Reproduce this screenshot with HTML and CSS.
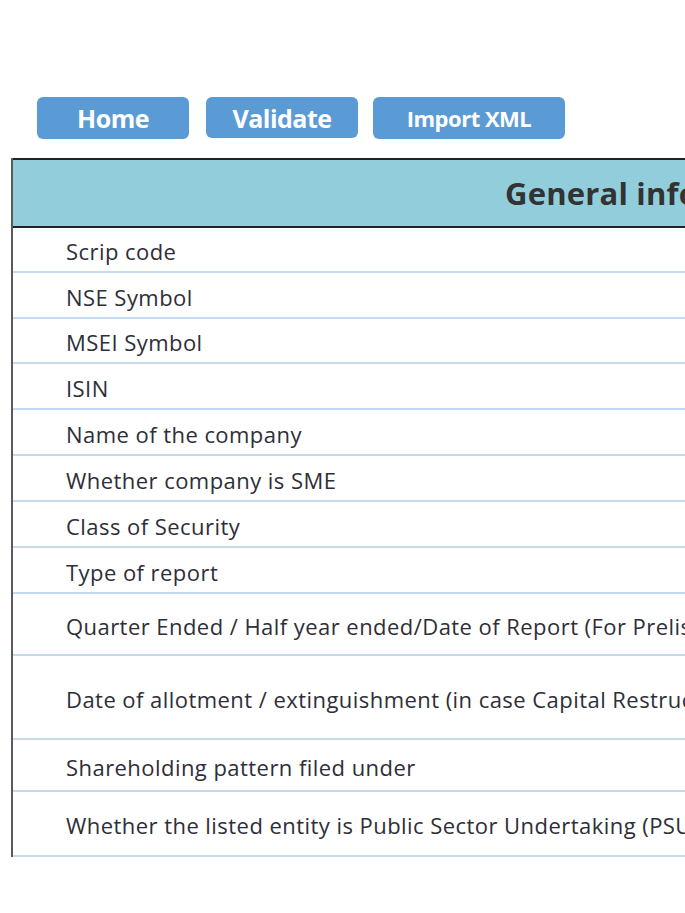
FILE: index.html
```html
<!DOCTYPE html>
<html>
<head>
<meta charset="utf-8">
<link rel="stylesheet" href="styles.css">
</head>
<body>
<div class="page">
  <div class="toolbar">
    <button class="btn btn-home">Home</button>
    <button class="btn btn-validate">Validate</button>
    <button class="btn btn-import">Import XML</button>
  </div>
  <div class="sheet">
    <div class="sheet-head">General information about company</div>
    <div class="row r45">Scrip code</div>
    <div class="row r46">NSE Symbol</div>
    <div class="row r45">MSEI Symbol</div>
    <div class="row r46">ISIN</div>
    <div class="row r46">Name of the company</div>
    <div class="row r46">Whether company is SME</div>
    <div class="row r46">Class of Security</div>
    <div class="row r46">Type of report</div>
    <div class="row r62">Quarter Ended / Half year ended/Date of Report (For Prelisting / Allotment)</div>
    <div class="row r84">Date of allotment / extinguishment (in case Capital Restructuring selected) / Listing Date</div>
    <div class="row r52">Shareholding pattern filed under</div>
    <div class="row r65">Whether the listed entity is Public Sector Undertaking (PSU)?</div>
  </div>
</div>
</body>
</html>
```
FILE: styles.css
```css
html, body {
  margin: 0;
  padding: 0;
  background: #ffffff;
  overflow: hidden;
}
.page {
  width: 685px;
  height: 913px;
  overflow: hidden;
  padding-top: 97px;
  box-sizing: border-box;
  font-family: "Open Sans", "Noto Sans", sans-serif;
}
.toolbar {
  display: flex;
  padding-left: 37px;
  height: 42px;
  align-items: flex-start;
}
.btn {
  background: #5b9bd5;
  color: #ffffff;
  border: none;
  border-radius: 6px;
  font-family: "Open Sans", "Noto Sans", sans-serif;
  font-weight: 700;
  padding: 0;
  height: 42px;
  letter-spacing: -0.5px;
}
.btn-home { width: 152px; font-size: 25px; margin-right: 17px; }
.btn-validate { width: 152px; font-size: 25px; margin-right: 15px; height: 41px; }
.btn-import { width: 192px; font-size: 22px; }
.sheet {
  margin-top: 19px;
  margin-left: 11px;
  width: 1800px;
  border-left: 2px solid #5a5a5a;
}
.sheet-head {
  height: 66px;
  background: #92cddc;
  border-top: 2px solid #222222;
  border-bottom: 2px solid #222222;
  display: flex;
  align-items: center;
  padding-left: 492px;
  font-size: 31px;
  font-weight: 700;
  color: #333333;
  letter-spacing: 0.2px;
}
.row {
  display: flex;
  align-items: center;
  padding-left: 53px;
  padding-top: 3px;
  border-bottom: 2px solid #c5d9f1;
  box-sizing: border-box;
  font-size: 22px;
  color: #2e2e38;
  white-space: nowrap;
  letter-spacing: 0.45px;
}
.r45 { height: 45px; }
.r46 { height: 46px; }
.r52 { height: 52px; }
.r62 { height: 62px; }
.r65 { height: 65px; }
.r84 { height: 84px; }
```
